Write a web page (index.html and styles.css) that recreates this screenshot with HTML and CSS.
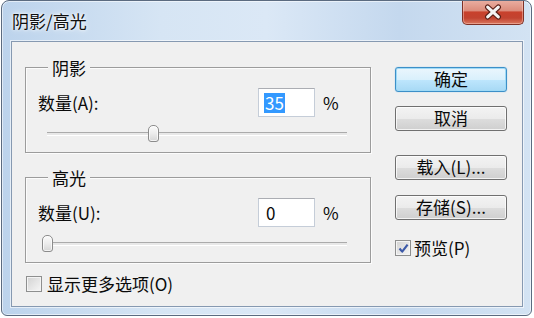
FILE: index.html
```html
<!DOCTYPE html>
<html lang="zh-CN">
<head>
<meta charset="utf-8">
<title>阴影/高光</title>
<link rel="stylesheet" href="styles.css">
</head>
<body>
<div class="window">
  <div class="titlebar">
    <div class="title">阴影/高光</div>
    <div class="close">
      <svg width="62" height="24" viewBox="0 0 62 24">
        <path d="M25.5 7 L36.5 17 M36.5 7 L25.5 17" stroke="#5a1f17" stroke-width="5.5" stroke-linecap="round" fill="none"/>
        <path d="M25.5 7 L36.5 17 M36.5 7 L25.5 17" stroke="#f4f4f4" stroke-width="3.2" stroke-linecap="round" fill="none"/>
      </svg>
    </div>
  </div>
  <div class="client">
    <div class="left">
      <div class="group">
        <div class="legend">阴影</div>
        <div class="row">
          <span class="label">数量(A):</span>
          <div class="input"><span class="sel">35</span></div>
          <span class="pct">%</span>
        </div>
        <div class="slider">
          <div class="track"></div>
          <div class="thumb" style="left:110px"></div>
        </div>
      </div>
      <div class="group group-second">
        <div class="legend">高光</div>
        <div class="row">
          <span class="label">数量(U):</span>
          <div class="input"><span class="val">0</span></div>
          <span class="pct">%</span>
        </div>
        <div class="slider">
          <div class="track"></div>
          <div class="thumb" style="left:4px"></div>
        </div>
      </div>
      <div class="check check-more">
        <span class="box"></span>
        <span class="check-text">显示更多选项(O)</span>
      </div>
    </div>
    <div class="right">
      <div class="btn btn-default">确定</div>
      <div class="btn btn-cancel">取消</div>
      <div class="btn btn-load">载入(L)...</div>
      <div class="btn btn-save">存储(S)...</div>
      <div class="check check-preview">
        <span class="box">
          <svg width="13" height="13" viewBox="0 0 13 13"><path d="M2.5 6.5 L5.2 9.6 L10.6 2.6" stroke="#3d5aa8" stroke-width="2.2" fill="none" stroke-linejoin="round"/></svg>
        </span>
        <span class="check-text">预览(P)</span>
      </div>
    </div>
  </div>
</div>
</body>
</html>
```
FILE: styles.css
```css
* { box-sizing: border-box; }
html, body { margin: 0; padding: 0; }
body {
  background: #ffffff;
  width: 534px;
  height: 318px;
  overflow: hidden;
  font-family: "Noto Sans CJK SC", "Noto Sans", sans-serif;
  font-size: 17px;
  color: #0a0a0a;
}
.window {
  margin-left: 1px;
  width: 531px;
  height: 316px;
  border: 1px solid #5b6b80;
  border-radius: 8px 8px 6px 6px;
  background: linear-gradient(to right, #bcd3ec 0%, #d6e5f4 30%, #dbe8f6 50%, #c4d8ee 75%, #d3e3f3 100%);
  box-shadow: inset 0 0 0 1px rgba(255,255,255,0.55);
  overflow: hidden;
}
.titlebar {
  height: 40px;
  display: flex;
  justify-content: space-between;
  align-items: flex-start;
}
.title {
  padding: 10px 0 0 10px;
  line-height: 20px;
  font-size: 17px;
  color: #101010;
  text-shadow: 0 0 6px #ffffff, 0 0 3px #ffffff;
}
.close {
  margin-top: -1px;
  margin-right: 7px;
  width: 62px;
  height: 25px;
  border: 1px solid #7e3126;
  border-top: none;
  border-radius: 0 0 5px 5px;
  background: linear-gradient(to bottom, #eab0a3 0%, #dc8c7b 45%, #c8412c 50%, #c24330 75%, #d9775e 100%);
  box-shadow: inset 0 0 0 1px rgba(255,210,200,0.45);
  display: flex;
}
.close svg { display: block; }
.client {
  margin: 0 8px 0 9px;
  height: 266px;
  background: #f0f0f0;
  border: 1px solid #8699b1;
  box-shadow: 0 0 0 1px rgba(255,255,255,0.6);
  padding: 25px 0 0 13px;
  display: flex;
  align-items: flex-start;
}
.left { width: 346px; }
.group {
  height: 86px;
  border: 1px solid #9c9c9c;
  box-shadow: inset 1px 1px 0 #fcfcfc, 1px 1px 0 #fcfcfc;
  padding-left: 12px;
}
.group-second { margin-top: 24px; }
.legend {
  width: fit-content;
  margin-top: -10px;
  margin-left: 10px;
  padding: 0 4px;
  height: 20px;
  line-height: 20px;
  background: #f0f0f0;
}
.row {
  margin-top: 10px;
  height: 29px;
  display: flex;
  align-items: center;
}
.label {
  width: 220px;
  line-height: 20px;
}
.input {
  width: 57px;
  height: 29px;
  background: #ffffff;
  border: 1px solid #c5cdd8;
  border-top-color: #abadb3;
  padding-left: 5px;
  display: flex;
  align-items: center;
}
.sel {
  background: #3399ff;
  color: #ffffff;
  line-height: 20px;
  height: 20px;
  padding: 0 1px;
}
.val {
  line-height: 20px;
  padding-left: 2px;
}
.pct {
  margin-left: 8px;
  line-height: 20px;
}
.slider {
  position: relative;
  margin-top: 8px;
  height: 17px;
}
.track {
  position: absolute;
  left: 9px;
  top: 7px;
  width: 300px;
  height: 4px;
  background: #e8e8e8;
  border-top: 1px solid #ababab;
  border-bottom: 1px solid #ffffff;
}
.thumb {
  position: absolute;
  top: 0;
  width: 11px;
  height: 17px;
  border: 1px solid #8c8c8c;
  border-radius: 5px 5px 3px 3px;
  background: linear-gradient(to bottom, #fbfbfb 0%, #ececec 50%, #d6d6d6 100%);
  box-shadow: inset 0 0 0 1px rgba(255,255,255,0.7);
}
.check {
  display: flex;
  align-items: center;
  height: 20px;
  line-height: 20px;
}
.check-more { margin-top: 11px; margin-left: 1px; }
.box {
  width: 16px;
  height: 16px;
  border: 1px solid #8e8f8f;
  background: linear-gradient(135deg, #d2d2d2 0%, #e8e8e8 60%, #f6f6f6 100%);
  box-shadow: inset 0 0 0 1px #f4f4f4;
  display: flex;
  align-items: center;
  justify-content: center;
}
.check-more .check-text { margin-left: 5px; }
.right {
  margin-left: 24px;
  width: 112px;
}
.btn {
  width: 112px;
  height: 25px;
  border: 1px solid #707070;
  border-radius: 3px;
  background: linear-gradient(to bottom, #f3f3f3 0%, #ebebeb 50%, #dddddd 51%, #cfcfcf 100%);
  box-shadow: inset 0 0 0 1px rgba(255,255,255,0.75);
  text-align: center;
  line-height: 22px;
  font-size: 17px;
  color: #0a0a0a;
}
.btn-default {
  border-color: #3c8fc8;
  background: linear-gradient(to bottom, #eaf6fd 0%, #d9f0fc 50%, #bee6fd 51%, #a7d9f5 100%);
  box-shadow: inset 0 0 0 1px #9fdaf6, 0 0 1px #5fb4e8;
}
.btn-cancel { margin-top: 14px; }
.btn-load { margin-top: 24px; }
.btn-save { margin-top: 15px; }
.check-preview { margin-top: 18px; }
.check-preview .box svg { display: block; }
.check-preview .check-text { margin-left: 3px; }
```
